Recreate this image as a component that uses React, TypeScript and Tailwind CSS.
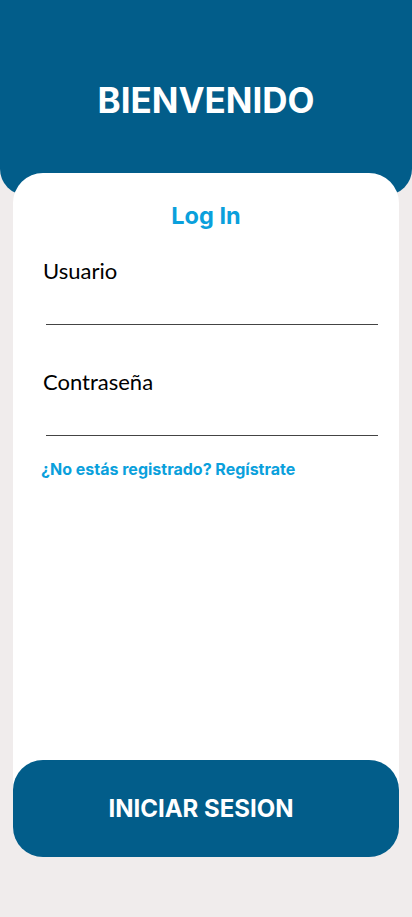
import { useState } from "react"

const inter = "font-['Inter',sans-serif]"
const body = "font-['Lato',sans-serif]"

function Field({ label, type, value, onChange }: { label: string; type: string; value: string; onChange: (v: string) => void }) {
  return (
    <label className="block">
      <span className={`${body} block pl-[30px] text-[22px] leading-[28px] text-black`}>{label}</span>
      <input
        type={type}
        value={value}
        onChange={(e) => onChange(e.target.value)}
        className="mt-[11px] ml-[33px] block h-[29px] w-[332px] border-b border-[#444] bg-transparent text-base outline-none"
      />
    </label>
  )
}

export default function App() {
  const [user, setUser] = useState("")
  const [pass, setPass] = useState("")

  return (
    <div className="flex min-h-[917px] flex-col bg-[#f0ecec]">
      <header className="flex h-[195px] items-start justify-center rounded-b-[26px] bg-[#025d8a] pt-[79px]">
        <h1 className={`${inter} text-[35px] font-bold leading-[42px] text-white`}>BIENVENIDO</h1>
      </header>

      <main className="mx-[13px] -mt-[22px] flex flex-col">
        <section className="flex h-[587px] flex-col rounded-t-[30px] bg-white pt-[27px]">
          <h2 className={`${inter} text-center text-[23.5px] font-bold leading-[32px] text-[#0aa0dc]`}>Log In</h2>
          <div className="mt-[25px]">
            <Field label="Usuario" type="text" value={user} onChange={setUser} />
          </div>
          <div className="mt-[43px]">
            <Field label="Contraseña" type="password" value={pass} onChange={setPass} />
          </div>
          <a href="#" className={`${inter} mt-[23px] pl-[28px] text-[16px] font-bold leading-[20px] text-[#0aa0dc]`}>
            ¿No estás registrado? Regístrate
          </a>
        </section>
        <div className="bg-[linear-gradient(to_bottom,white_50%,transparent_50%)]">
          <button
            type="button"
            className={`${inter} flex h-[97px] w-full items-center justify-center rounded-[30px] bg-[#025d8a] pr-[10px] text-[24px] font-bold text-white`}
          >
            INICIAR SESION
          </button>
        </div>
      </main>
    </div>
  )
}
